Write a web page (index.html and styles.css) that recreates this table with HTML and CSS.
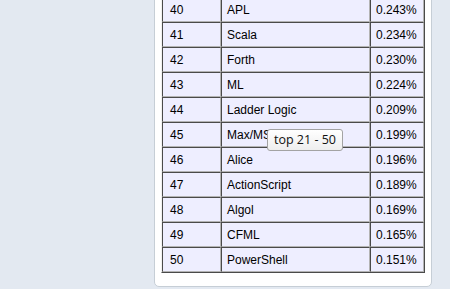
FILE: index.html
```html
<!DOCTYPE html>
<html>
<head>
<meta charset="utf-8">
<link rel="stylesheet" href="styles.css">
</head>
<body>
<div class="page">
  <div class="panel">
    <table class="ranks">
      <colgroup><col class="c-rank"><col class="c-lang"><col class="c-pct"></colgroup>
      <tbody>
        <tr><td>40</td><td>APL</td><td>0.243%</td></tr>
        <tr><td>41</td><td>Scala</td><td>0.234%</td></tr>
        <tr><td>42</td><td>Forth</td><td>0.230%</td></tr>
        <tr><td>43</td><td>ML</td><td>0.224%</td></tr>
        <tr><td>44</td><td>Ladder Logic</td><td>0.209%</td></tr>
        <tr><td>45</td><td>Max/MSP</td><td>0.199%</td></tr>
        <tr><td>46</td><td>Alice</td><td>0.196%</td></tr>
        <tr><td>47</td><td>ActionScript</td><td>0.189%</td></tr>
        <tr><td>48</td><td>Algol</td><td>0.169%</td></tr>
        <tr><td>49</td><td>CFML</td><td>0.165%</td></tr>
        <tr><td>50</td><td>PowerShell</td><td>0.151%</td></tr>
      </tbody>
    </table>
  </div>
  <div class="tooltip">top 21 - 50</div>
</div>
</body>
</html>
```
FILE: styles.css
```css
html, body {
  margin: 0;
  padding: 0;
  background: #e3e9f1;
}
body {
  overflow: hidden;
  height: 289px;
}
.page {
  position: relative;
  display: flow-root;
  width: 450px;
}
.panel {
  box-sizing: border-box;
  width: 278px;
  margin: -11px 0 0 154px;
  padding: 6px 6px 13px 6px;
  background: #ffffff;
  border: 1px solid #c6ced6;
  border-radius: 0 0 5px 5px;
}
.ranks {
  table-layout: fixed;
  width: 264px;
  border-collapse: separate;
  border-spacing: 0;
  border-style: solid;
  border-width: 1px;
  border-color: #f0f0f0 #4a4a4a #4a4a4a #f0f0f0;
  font-family: "Liberation Sans", Arial, sans-serif;
  font-size: 12px;
  color: #000;
}
.c-rank { width: 59px; }
.c-lang { width: 149px; }
.c-pct { width: 54px; }
.ranks td {
  box-sizing: border-box;
  height: 25px;
  padding: 0 0 0 5px;
  background: #eeeeff;
  border-style: solid;
  border-width: 1px;
  border-color: #4a4a4a #b4b4b4 #b4b4b4 #4a4a4a;
  vertical-align: middle;
  white-space: nowrap;
  overflow: hidden;
}
.ranks td:first-child {
  padding-left: 7px;
}
.tooltip {
  position: absolute;
  left: 267px;
  top: 129px;
  box-sizing: border-box;
  width: 76px;
  height: 22px;
  border: 1px solid #a3a3a3;
  border-radius: 3px;
  background: linear-gradient(#ffffff, #eeeeee);
  font-family: "Open Sans", "Liberation Sans", sans-serif;
  font-size: 12.5px;
  line-height: 20px;
  text-align: center;
  color: #111;
}
```
